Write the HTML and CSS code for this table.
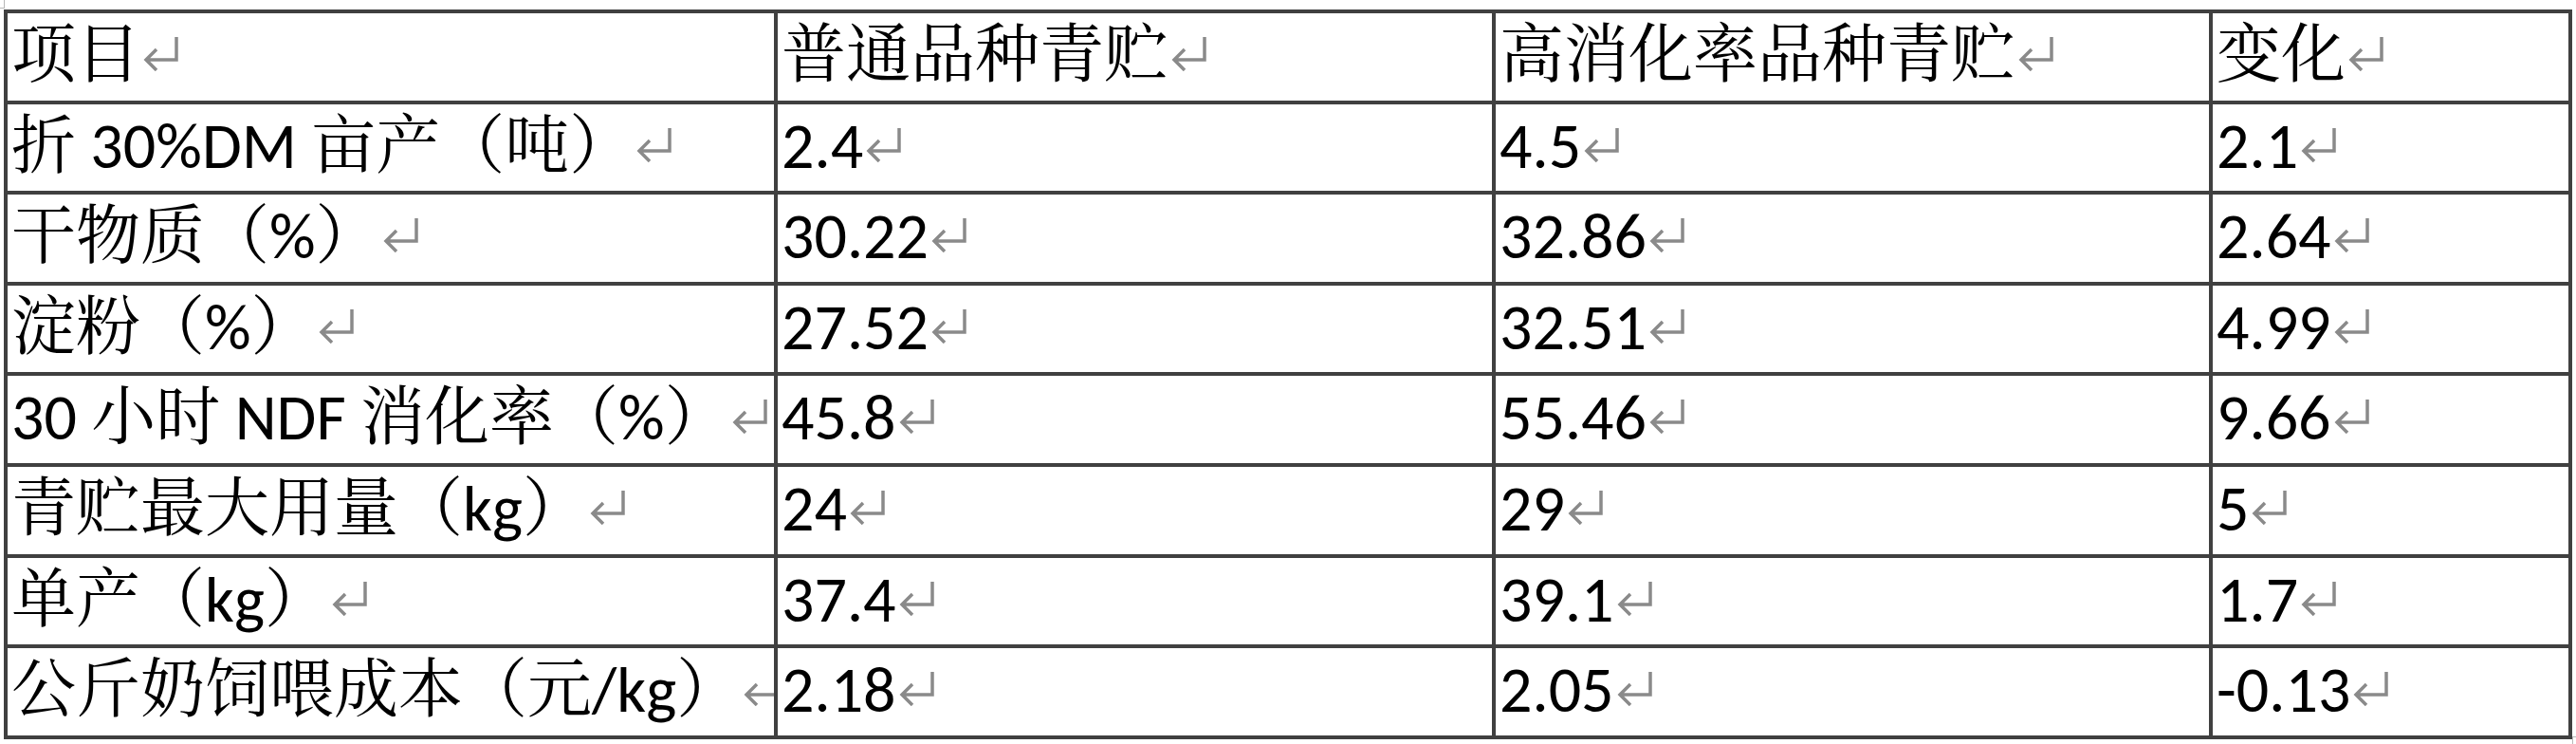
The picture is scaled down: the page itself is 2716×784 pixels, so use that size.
FILE: index.html
```html
<!DOCTYPE html>
<html lang="zh-CN">
<head>
<meta charset="utf-8">
<title>青贮对比</title>
<link rel="stylesheet" href="styles.css">
</head>
<body>
<span class="mark mark-tl"></span>
<span class="mark mark-br"></span>
<div class="table">
  <div class="cell">项目<svg class="ret" viewBox="0 0 42 38"><path d="M37 2V26H5M16 15L5 26L16 37"/></svg></div>
  <div class="cell">普通品种青贮<svg class="ret" viewBox="0 0 42 38"><path d="M37 2V26H5M16 15L5 26L16 37"/></svg></div>
  <div class="cell">高消化率品种青贮<svg class="ret" viewBox="0 0 42 38"><path d="M37 2V26H5M16 15L5 26L16 37"/></svg></div>
  <div class="cell">变化<svg class="ret" viewBox="0 0 42 38"><path d="M37 2V26H5M16 15L5 26L16 37"/></svg></div>

  <div class="cell">折 30%DM 亩产（吨）<svg class="ret" viewBox="0 0 42 38"><path d="M37 2V26H5M16 15L5 26L16 37"/></svg></div>
  <div class="cell">2.4<svg class="ret" viewBox="0 0 42 38"><path d="M37 2V26H5M16 15L5 26L16 37"/></svg></div>
  <div class="cell">4.5<svg class="ret" viewBox="0 0 42 38"><path d="M37 2V26H5M16 15L5 26L16 37"/></svg></div>
  <div class="cell">2.1<svg class="ret" viewBox="0 0 42 38"><path d="M37 2V26H5M16 15L5 26L16 37"/></svg></div>

  <div class="cell">干物质（%）<svg class="ret" viewBox="0 0 42 38"><path d="M37 2V26H5M16 15L5 26L16 37"/></svg></div>
  <div class="cell">30.22<svg class="ret" viewBox="0 0 42 38"><path d="M37 2V26H5M16 15L5 26L16 37"/></svg></div>
  <div class="cell">32.86<svg class="ret" viewBox="0 0 42 38"><path d="M37 2V26H5M16 15L5 26L16 37"/></svg></div>
  <div class="cell">2.64<svg class="ret" viewBox="0 0 42 38"><path d="M37 2V26H5M16 15L5 26L16 37"/></svg></div>

  <div class="cell">淀粉（%）<svg class="ret" viewBox="0 0 42 38"><path d="M37 2V26H5M16 15L5 26L16 37"/></svg></div>
  <div class="cell">27.52<svg class="ret" viewBox="0 0 42 38"><path d="M37 2V26H5M16 15L5 26L16 37"/></svg></div>
  <div class="cell">32.51<svg class="ret" viewBox="0 0 42 38"><path d="M37 2V26H5M16 15L5 26L16 37"/></svg></div>
  <div class="cell">4.99<svg class="ret" viewBox="0 0 42 38"><path d="M37 2V26H5M16 15L5 26L16 37"/></svg></div>

  <div class="cell">30 小时 NDF 消化率（%）<svg class="ret" viewBox="0 0 42 38"><path d="M37 2V26H5M16 15L5 26L16 37"/></svg></div>
  <div class="cell">45.8<svg class="ret" viewBox="0 0 42 38"><path d="M37 2V26H5M16 15L5 26L16 37"/></svg></div>
  <div class="cell">55.46<svg class="ret" viewBox="0 0 42 38"><path d="M37 2V26H5M16 15L5 26L16 37"/></svg></div>
  <div class="cell">9.66<svg class="ret" viewBox="0 0 42 38"><path d="M37 2V26H5M16 15L5 26L16 37"/></svg></div>

  <div class="cell">青贮最大用量（kg）<svg class="ret" viewBox="0 0 42 38"><path d="M37 2V26H5M16 15L5 26L16 37"/></svg></div>
  <div class="cell">24<svg class="ret" viewBox="0 0 42 38"><path d="M37 2V26H5M16 15L5 26L16 37"/></svg></div>
  <div class="cell">29<svg class="ret" viewBox="0 0 42 38"><path d="M37 2V26H5M16 15L5 26L16 37"/></svg></div>
  <div class="cell">5<svg class="ret" viewBox="0 0 42 38"><path d="M37 2V26H5M16 15L5 26L16 37"/></svg></div>

  <div class="cell">单产（kg）<svg class="ret" viewBox="0 0 42 38"><path d="M37 2V26H5M16 15L5 26L16 37"/></svg></div>
  <div class="cell">37.4<svg class="ret" viewBox="0 0 42 38"><path d="M37 2V26H5M16 15L5 26L16 37"/></svg></div>
  <div class="cell">39.1<svg class="ret" viewBox="0 0 42 38"><path d="M37 2V26H5M16 15L5 26L16 37"/></svg></div>
  <div class="cell">1.7<svg class="ret" viewBox="0 0 42 38"><path d="M37 2V26H5M16 15L5 26L16 37"/></svg></div>

  <div class="cell">公斤奶饲喂成本（元/kg）<svg class="ret" viewBox="0 0 42 38"><path d="M37 2V26H5M16 15L5 26L16 37"/></svg></div>
  <div class="cell">2.18<svg class="ret" viewBox="0 0 42 38"><path d="M37 2V26H5M16 15L5 26L16 37"/></svg></div>
  <div class="cell">2.05<svg class="ret" viewBox="0 0 42 38"><path d="M37 2V26H5M16 15L5 26L16 37"/></svg></div>
  <div class="cell">-0.13<svg class="ret" viewBox="0 0 42 38"><path d="M37 2V26H5M16 15L5 26L16 37"/></svg></div>
</div>
</body>
</html>
```

FILE: styles.css
```css
html, body {
  margin: 0;
  padding: 0;
  background: #ffffff;
}

body {
  padding: 10px 0 0 4px;
  font-family: "Carlito", "Open Sans", "Noto Serif CJK SC", "Noto Sans CJK SC", sans-serif;
  color: #000000;
}

.table {
  display: grid;
  grid-template-columns: 808px 753px 752px 375px;
  grid-template-rows: repeat(8, 91.6px);
  gap: 4px;
  padding: 4px;
  width: max-content;
  background: #404040;
}

.cell {
  background: #ffffff;
  overflow: hidden;
  white-space: nowrap;
  font-size: 68px;
  line-height: 88px;
  padding: 0 0 0 4px;
}

.ret {
  width: 42px;
  height: 38px;
  margin-left: 1px;
  vertical-align: 6px;
  fill: none;
  stroke: #8a8a8a;
  stroke-width: 3.5;
}

.mark {
  position: fixed;
  width: 4px;
  height: 8px;
  border-color: #b8b8b8;
  border-style: solid;
}

.mark-tl {
  left: 0;
  top: 0;
  border-width: 0 1px 1px 0;
}

.mark-br {
  left: 2712px;
  top: 776px;
  border-width: 1px 0 0 1px;
}
```
